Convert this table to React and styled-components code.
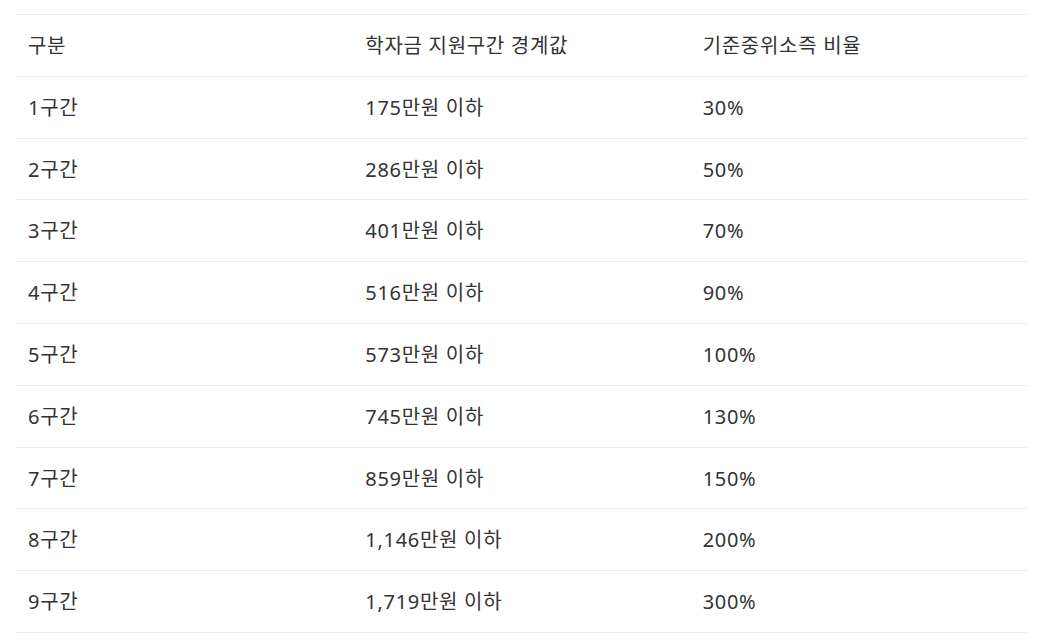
import React from "react";
import styled, { createGlobalStyle } from "styled-components";

const GlobalStyle = createGlobalStyle`
  body {
    margin: 0;
    background: #ffffff;
    font-family: "Noto Sans", "Noto Sans CJK KR", sans-serif;
  }
`;

const rows = [
  ["1구간", "175만원 이하", "30%"],
  ["2구간", "286만원 이하", "50%"],
  ["3구간", "401만원 이하", "70%"],
  ["4구간", "516만원 이하", "90%"],
  ["5구간", "573만원 이하", "100%"],
  ["6구간", "745만원 이하", "130%"],
  ["7구간", "859만원 이하", "150%"],
  ["8구간", "1,146만원 이하", "200%"],
  ["9구간", "1,719만원 이하", "300%"],
];

export default function App() {
  return (
    <Wrapper>
      <GlobalStyle />
      <Table>
        <thead>
          <tr>
            <Cell as="th">구분</Cell>
            <Cell as="th">학자금 지원구간 경계값</Cell>
            <Cell as="th">기준중위소즉 비율</Cell>
          </tr>
        </thead>
        <tbody>
          {rows.map((r) => (
            <tr key={r[0]}>
              {r.map((c, i) => (
                <Cell key={i}>{c}</Cell>
              ))}
            </tr>
          ))}
        </tbody>
      </Table>
    </Wrapper>
  );
}

const Wrapper = styled.div`
  padding: 14px 15px;
`;

const Table = styled.table`
  width: 1012px;
  border-collapse: collapse;
  table-layout: fixed;
  border-top: 1px solid #ebebeb;
  color: #333333;
`;

const Cell = styled.td`
  padding: 17px 13px 15px;
  height: 28.8px;
  line-height: 28.8px;
  font-size: 20px;
  font-weight: 400;
  letter-spacing: 0.7px;
  text-align: left;
  border-bottom: 1px solid #ebebeb;
  white-space: nowrap;
`;
